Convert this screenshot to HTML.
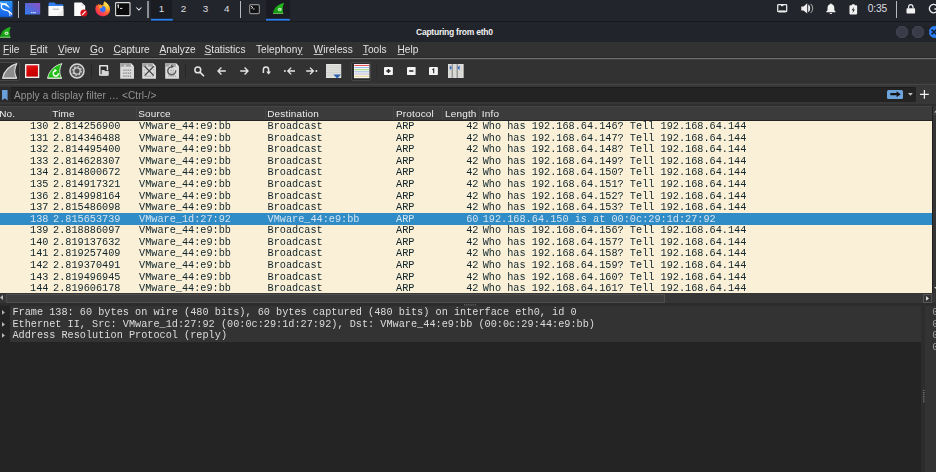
<!DOCTYPE html>
<html>
<head>
<meta charset="utf-8">
<title>Capturing from eth0</title>
<style>
*{margin:0;padding:0;box-sizing:border-box;}
html,body{width:936px;height:472px;overflow:hidden;background:#242424;}
body{font-family:"Liberation Sans",sans-serif;position:relative;color:#e6e6e6;}
.abs{position:absolute;}
svg{position:absolute;overflow:visible;}
/* ---------- desktop panel ---------- */
#panel{left:0;top:0;width:936px;height:21.3px;background:#23252c;}
#panelline{left:0;top:20.8px;width:936px;height:1px;background:#17191e;}
.psep{position:absolute;top:1px;width:1.3px;height:16.5px;background:#b9babd;}
.ws{position:absolute;top:2.5px;width:22px;text-align:center;font-size:9.9px;color:#dedee0;}
.active{position:absolute;top:0;height:19px;background:#1b1c22;}
.uline{position:absolute;top:18.7px;height:1.6px;background:#2a7fe8;}
#clock{position:absolute;left:867.7px;top:3.1px;font-size:10.2px;color:#dedee0;letter-spacing:-0.1px;}
/* ---------- title bar ---------- */
#title{left:0;top:21.8px;width:936px;height:20.4px;background:#22242c;}
#title .t{position:absolute;left:416px;top:5.1px;white-space:nowrap;font-size:8.5px;letter-spacing:-0.24px;font-weight:bold;color:#f0f0f0;}
.wbtn{position:absolute;top:4.7px;width:11.2px;height:11.2px;border-radius:50%;background:#393c48;border:0.6px solid #474a57;}
/* ---------- menu bar ---------- */
#menubar{left:0;top:42px;width:936px;height:15px;background:#323232;font-size:10.1px;letter-spacing:0.06px;color:#e2e2e2;}
#menubar span{position:absolute;top:1.8px;white-space:nowrap;}
#menubar u{text-decoration:underline;text-underline-offset:1px;text-decoration-thickness:0.7px;text-decoration-color:#bdbdbd;}
/* ---------- toolbar ---------- */
#toolbar{left:0;top:57.5px;width:936px;height:27px;background:#323232;}
#tbdark{left:0;top:57px;width:936px;height:1px;background:#272727;}
#tbline{left:0;top:58px;width:936px;height:1px;background:#727272;}
#tbline2{left:0;top:59px;width:936px;height:1px;background:#3c3c3c;}
#tbbot{left:0;top:83px;width:936px;height:1px;background:#363636;}
#tbbot2{left:0;top:84px;width:936px;height:1px;background:#444444;}
.tsep{position:absolute;top:6.5px;width:1px;height:14px;background:#272727;}
.pressed{position:absolute;top:4px;height:19.2px;border:1px solid #464646;border-radius:2px;background:#2b2b2b;}
/* ---------- filter bar ---------- */
#filterbar{left:0;top:85px;width:936px;height:19px;background:#373737;}
#filterbar2{left:0;top:104px;width:936px;height:2px;background:#2e2e2e;}
#filterinput{left:0;top:87px;width:916px;height:14.6px;background:#232323;box-shadow:inset 0 1px 0 #1c1c1c;border-radius:0 2px 2px 0;}
#filterinput .lead{position:absolute;left:0;top:0;width:11.3px;height:14.6px;background:#2a2a2a;}
#filterinput .ph{position:absolute;left:13.6px;top:2.6px;font-size:10.1px;letter-spacing:0.1px;color:#959595;white-space:nowrap;}
#applybtn{position:absolute;left:887px;top:2.8px;width:16px;height:9.6px;background:#6ea4dc;border-radius:1.5px;}
/* ---------- packet list ---------- */
#hdr{left:0;top:106px;width:936px;height:14px;background:#3b3b3b;box-shadow:inset 0 1px 0 #454545;font-size:10px;letter-spacing:0.16px;color:#eeeeee;}
#hdr span{position:absolute;top:1.5px;white-space:nowrap;transform:scaleY(0.91);transform-origin:0 82%;}
#hdr i{position:absolute;top:0;width:1px;height:14px;background:#444444;}
#plbg{left:0;top:120.5px;width:932px;height:172.3px;background:#faf0d7;}
#selbg{left:0;top:213.2px;width:932px;height:11.65px;background:#308cc6;}
#plist{left:0;top:120.5px;width:932px;height:172.3px;overflow:hidden;font-family:"Liberation Mono",monospace;font-size:10.225px;color:#0e232a;}
.row{position:absolute;left:0;width:932px;height:11.59px;line-height:11.59px;white-space:pre;}
.row span{position:absolute;top:0px;white-space:pre;}
.row.sel{color:#d2e4f2;}
.c0{left:0;width:48.5px;text-align:right;}
.c1{left:53px;}
.c2{left:139px;}
.c3{left:267.5px;}
.c4{left:396px;}
.c5{left:440px;width:38.5px;text-align:right;}
.c6{left:482.7px;}
#vs{left:932px;top:106.2px;width:4px;height:186.6px;background:#343434;}
#hs{left:0;top:292.8px;width:936px;height:10.2px;background:#363636;}
#hs .handle{position:absolute;left:6.2px;top:1.2px;width:659px;height:9px;background:#3d3d3d;border:1px solid #4d4d4d;}
#hs .rb{position:absolute;left:923px;top:1.3px;width:8.8px;height:8.6px;background:#333;border:1px solid #555;}
#split1{left:0;top:303px;width:936px;height:3.4px;background:#2c2c2c;}
/* ---------- detail pane ---------- */
#detail{left:0;top:306.2px;width:921px;height:165.8px;background:#242424;font-family:"Liberation Mono",monospace;font-size:10.225px;color:#dcdcdc;}
#detail .bg{position:absolute;left:9.9px;top:0;width:911.1px;height:35.8px;background:#333333;}
#detail .ln{position:absolute;left:12.4px;white-space:pre;height:11.5px;line-height:11.5px;}
#split2{left:921px;top:306.2px;width:3.8px;height:165.8px;background:#2d2d2d;}
#hex{left:924.7px;top:306.3px;width:11.3px;height:165.7px;background:#333333;font-family:"Liberation Mono",monospace;font-size:10.225px;color:#9c9c9c;}
#hex .bg{display:none;}
#hex div.h{position:absolute;left:7.3px;height:11.5px;line-height:11.5px;}

#menubar,#filterinput .ph,#hdr,#plist,#detail,#hex{will-change:transform;}

</style>
</head>
<body>
<div id="panel" class="abs">
<svg width="0" height="0" style="position:absolute"><defs>
<linearGradient id="kg" x1="0" y1="0" x2="0" y2="1"><stop offset="0" stop-color="#2b94f7"/><stop offset="1" stop-color="#155fe6"/></linearGradient>
<linearGradient id="dg" x1="0" y1="1" x2="1" y2="0"><stop offset="0" stop-color="#2f7df0"/><stop offset="0.55" stop-color="#5f63d4"/><stop offset="1" stop-color="#9350c4"/></linearGradient>
<radialGradient id="ffg" cx="0.78" cy="0.18" r="1.0"><stop offset="0" stop-color="#ffe85a"/><stop offset="0.28" stop-color="#ffc030"/><stop offset="0.52" stop-color="#ff7a30"/><stop offset="0.78" stop-color="#ff3a44"/><stop offset="1" stop-color="#e02a78"/></radialGradient>
<linearGradient id="fg2" x1="0" y1="1" x2="1" y2="0"><stop offset="0" stop-color="#128c10"/><stop offset="0.6" stop-color="#1fb01a"/><stop offset="1" stop-color="#22bb1c"/></linearGradient>
<filter id="glow" x="-30%" y="-30%" width="160%" height="160%"><feGaussianBlur stdDeviation="0.9"/></filter>
</defs></svg>
<!-- kali menu button -->
<svg style="left:0;top:0" width="16" height="20" viewBox="0 0 16 20"><rect x="-3" y="0.7" width="15.6" height="16.3" rx="1" fill="#1a6fee" opacity="0.6" filter="url(#glow)"/><rect x="-1" y="1" width="13.3" height="15.7" rx="0.6" fill="url(#kg)"/>
<path d="M-0.5 2.3 L2.3 3 C3.6 3.3 4.6 3.1 5.6 3.5 C7.2 4.2 8.6 6 9.9 7.9 C8.4 7.3 7.2 6.2 5.6 5.4 C4.6 4.9 3.6 5 2.6 4.4 Z" fill="#ffffff"/>
<path d="M5.2 3.2 L6.8 2.6 L6.2 3.9 Z" fill="#fff"/>
<path d="M2.4 4.2 C0.9 5.4 0.9 7.8 2.6 9 C4.4 10.3 7 10 9 11.5 C10.3 12.5 11.2 13.4 11.7 14.2" stroke="#ffffff" stroke-width="1.25" fill="none" stroke-linecap="round"/>
<path d="M8.6 11.4 C9.4 12.6 9.8 14 9.9 15.6" stroke="#ffffff" stroke-width="0.9" fill="none" stroke-linecap="round"/>
<path d="M0 3.4 L1.6 4.6" stroke="#fff" stroke-width="0.8"/></svg>
<div class="psep" style="left:17.8px"></div>
<!-- show desktop -->
<svg style="left:25px;top:3px" width="15.4" height="11.6" viewBox="0 0 15.4 11.6"><rect x="0" y="0" width="15.2" height="11.4" rx="0.5" fill="url(#dg)"/><rect x="6" y="9.2" width="1.4" height="0.9" fill="#e8eefc"/><rect x="7.9" y="9.2" width="1.4" height="0.9" fill="#e8eefc"/><rect x="9.6" y="9.1" width="1" height="1.1" fill="#ffffff"/></svg>
<!-- file manager -->
<svg style="left:47.8px;top:1.8px" width="16" height="15" viewBox="0 0 16 15"><path d="M1.2 0.6 H6.6 L8 2.2 H14.6 Q15.2 2.2 15.2 2.8 V5 H0.6 V1.2 Q0.6 0.6 1.2 0.6 Z" fill="#2f80ee"/><path d="M0.4 3.9 H15.4 V13.4 Q15.4 14.1 14.7 14.1 H1.1 Q0.4 14.1 0.4 13.4 Z" fill="#fafafa"/><path d="M15.4 7 V13.4 Q15.4 14.1 14.7 14.1 H9 Z" fill="#ececec"/><rect x="4.8" y="6.4" width="6.2" height="1.6" rx="0.3" fill="#c9c9c9"/></svg>
<!-- text editor -->
<svg style="left:73.6px;top:1.6px" width="15" height="16" viewBox="0 0 15 16"><path d="M0.8 0.4 H7.6 L11.2 4 V13.4 Q11.2 14 10.6 14 H0.8 Q0.2 14 0.2 13.4 V1 Q0.2 0.4 0.8 0.4 Z" fill="#fbfbfb"/><path d="M7.6 0.4 L11.2 4 H8.2 Q7.6 4 7.6 3.4 Z" fill="#dcdcdc"/><circle cx="9.9" cy="11.1" r="3.5" fill="#d9141e"/><path d="M8.5 12.6 L11.3 9.6" stroke="#ffffff" stroke-width="1.1" stroke-linecap="round"/></svg>
<!-- firefox -->
<svg style="left:94.6px;top:1.2px" width="16" height="16" viewBox="0 0 16 16"><path d="M9.6 0.3 C10.6 1.4 12.2 2.2 13.4 3.8 C14.6 5.4 15.3 7.2 15 9.4 C14.5 12.8 11.6 15.2 8 15.2 C3.9 15.2 0.5 12.2 0.4 8.2 C0.4 6.2 1 4.6 2 3.4 C2.1 4 2.3 4.5 2.6 4.8 C2.7 4 3 3.2 3.4 2.8 C3.8 3.4 4.2 3.8 4.6 4 C4.9 3.6 5.3 3.3 5.7 3.2 C6 3.8 6.4 4.2 7 4.4 L8.2 4.6 C8.2 3 8.6 1.4 9.6 0.3 Z" fill="url(#ffg)"/><circle cx="7.8" cy="8" r="2.9" fill="#3272ff"/><path d="M4 5.8 C5 4.6 6.6 4.3 8.2 4.6 C7.4 5.2 7.2 5.8 7.4 6.4 C6.2 6.6 5.4 7 5 7.8 C4.4 7.2 4 6.6 4 5.8 Z" fill="#ffa024"/><path d="M4.9 9 C5.8 11 9.2 11.4 10.8 9 C10.8 11.8 8.6 13 6.6 12.4 C5.4 12 4.9 10.6 4.9 9 Z" fill="#9a2ac8" opacity="0.35"/></svg>
<!-- terminal launcher -->
<svg style="left:114.8px;top:2px" width="16" height="14.4" viewBox="0 0 16 14.4"><rect x="0.6" y="0.6" width="14.4" height="13" rx="0.8" fill="#0c0c0e" stroke="#dedede" stroke-width="1.1"/><path d="M3.3 2.6 V6.2 M2.4 3.4 L3.3 2.6" stroke="#f4f4f4" stroke-width="1" fill="none"/><path d="M5 6.4 H7.4" stroke="#f4f4f4" stroke-width="1" fill="none"/></svg>
<svg style="left:135.6px;top:6.8px" width="6" height="4" viewBox="0 0 6 4"><path d="M0.4 0.5 L2.9 3 L5.4 0.5" stroke="#f2f2f2" stroke-width="1.05" fill="none"/></svg>
<div class="psep" style="left:147.2px;width:1.6px;background:#8d8e91"></div>
<!-- workspaces -->
<div class="active" style="left:150.7px;width:21.8px"></div>
<svg style="left:150.7px;top:18px" width="21.8" height="3" viewBox="0 0 21.8 3"><rect x="0" y="0.8" width="21.8" height="1.8" fill="#2a7fee"/></svg>
<div class="ws" style="left:150.6px">1</div>
<div class="ws" style="left:172.4px">2</div>
<div class="ws" style="left:194.4px">3</div>
<div class="ws" style="left:215.8px">4</div>
<div class="psep" style="left:240px"></div>
<!-- task: terminal -->
<svg style="left:249.3px;top:3.7px" width="11" height="10.4" viewBox="0 0 11 10.4"><rect x="0.6" y="0.6" width="9.8" height="9.1" rx="1.4" fill="#111113" stroke="#8c8c8f" stroke-width="1.2"/><path d="M1.9 2.1 L4 3.6 L2.4 4.4" stroke="#ececec" stroke-width="0.9" fill="none"/><path d="M4.2 5 H5.6" stroke="#ececec" stroke-width="0.9"/></svg>
<!-- task: wireshark -->
<div class="active" style="left:266.4px;width:23.8px"></div>
<svg style="left:266.4px;top:18px" width="23.8" height="3" viewBox="0 0 23.8 3"><rect x="0" y="0.8" width="23.8" height="1.8" fill="#2a7fee"/></svg>
<svg style="left:272.7px;top:3.3px" width="11.3" height="11" viewBox="0 0 20 23" preserveAspectRatio="none"><path d="M0 21.4 C1.4 10.6 8 2.6 19.6 0 C16.6 7 16.4 14.4 18.2 21.4 Z" fill="url(#fg2)"/><path d="M0 20.8 L18 20.8 L18.3 22.6 L0 22.6 Z" fill="#86d67e"/><circle cx="12" cy="13.6" r="3.5" fill="#c4ecc0"/><circle cx="12" cy="14" r="1.3" fill="#3cb838"/></svg>
<!-- tray -->
<svg style="left:777.4px;top:4.3px" width="10.4" height="9" viewBox="0 0 10.4 9"><path d="M1.5 0.7 H8.9 Q9.7 0.7 9.7 1.5 V6.9 Q9.7 7.7 8.9 7.7 H1.5 Q0.7 7.7 0.7 6.9 V1.5 Q0.7 0.7 1.5 0.7 Z" fill="none" stroke="#ececec" stroke-width="1.25"/><path d="M1.8 6.4 H8.6 V8.3 H1.8 Z" fill="#ececec"/><path d="M4 0.8 H6.4 V2.2 H4 Z" fill="#ececec"/></svg>
<svg style="left:800.6px;top:3.1px" width="13" height="11" viewBox="0 0 13 11"><path d="M0.3 3.4 H2.6 L6.2 0.3 V10.5 L2.6 7.4 H0.3 Z" fill="#f0f0f0"/><path d="M7.2 1.6 C9.8 2.6 9.8 8.2 7.2 9.2 Z" fill="#f0f0f0"/><path d="M9.6 0.9 C12.4 3.2 12.4 7.6 9.6 9.9" stroke="#9c9c9f" stroke-width="1.1" fill="none"/></svg>
<svg style="left:825.6px;top:3.2px" width="10" height="11.4" viewBox="0 0 10 11.4"><path d="M4.9 0.4 C5.5 0.4 5.8 0.8 5.8 1.3 C7.4 1.8 8.3 3.2 8.3 5 V7.2 L9.5 8.6 V9.2 H0.3 V8.6 L1.5 7.2 V5 C1.5 3.2 2.4 1.8 4 1.3 C4 0.8 4.3 0.4 4.9 0.4 Z" fill="#f2f2f2"/><path d="M3.7 9.9 H6.1 C6.1 10.6 5.6 11.1 4.9 11.1 C4.2 11.1 3.7 10.6 3.7 9.9 Z" fill="#f2f2f2"/></svg>
<svg style="left:849px;top:3.8px" width="9" height="10.8" viewBox="0 0 9 11"><path d="M3 0.3 H5.6 V1.4 H7.4 Q8.2 1.4 8.2 2.2 V9.8 Q8.2 10.6 7.4 10.6 H1.2 Q0.4 10.6 0.4 9.8 V2.2 Q0.4 1.4 1.2 1.4 H3 Z" fill="#f2f2f2"/><path d="M5.2 2.8 L2.6 6.4 H4.2 L3.4 9.4 L6 5.6 H4.4 Z" fill="#23252c"/></svg>
<div id="clock">0:35</div>
<div class="psep" style="left:895.9px"></div>
<svg style="left:906px;top:4.2px" width="9.6" height="9.8" viewBox="0 0 9.6 9.8"><path d="M2.6 4.4 V2.9 C2.6 1.5 3.6 0.7 4.8 0.7 C6 0.7 7 1.5 7 2.9 V4.4" stroke="#f2f2f2" stroke-width="1.2" fill="none"/><rect x="0.5" y="4.2" width="8.6" height="5.2" rx="0.7" fill="#f2f2f2"/></svg>
<svg style="left:929.4px;top:4px" width="10" height="10" viewBox="0 0 10 10"><path d="M7.6 1.6 A4.2 4.2 0 1 0 8.8 5 H5.4" stroke="#f2f2f2" stroke-width="1.3" fill="none"/></svg>

</div>
<div id="panelline" class="abs"></div>
<div id="title" class="abs">
<svg style="left:0px;top:5px" width="11.2" height="10.9" viewBox="0 0 20 23" preserveAspectRatio="none"><defs><linearGradient id="fg" x1="0" y1="1" x2="1" y2="0"><stop offset="0" stop-color="#128c10"/><stop offset="0.6" stop-color="#1fb01a"/><stop offset="1" stop-color="#22bb1c"/></linearGradient></defs><path d="M0 21.4 C1.4 10.6 8 2.6 19.2 0 C16.4 7 16.2 14.4 18.6 21.4 Z" fill="url(#fg)"/><path d="M0 20.6 L18.4 20.6 L18.8 22.6 L0 22.6 Z" fill="#86d67e"/><circle cx="11.6" cy="13.2" r="3.5" fill="#c4ecc0"/><circle cx="11.6" cy="13.6" r="1.3" fill="#3cb838"/></svg>
<div class="t">Capturing from eth0</div>
<div class="wbtn" style="left:896.4px"></div>
<div class="wbtn" style="left:912.4px"></div>
<div class="wbtn" style="left:928.6px;background:#2b7df0;border-color:#2b7df0"></div>
<svg style="left:931.2px;top:7.6px" width="6" height="6" viewBox="0 0 6 6"><path d="M0.6 0.6 L5.4 5.4 M5.4 0.6 L0.6 5.4" stroke="#10203a" stroke-width="1.5" fill="none"/></svg>
</div>
<div id="menubar" class="abs">
<span style="left:3px"><u>F</u>ile</span>
<span style="left:30px"><u>E</u>dit</span>
<span style="left:58px"><u>V</u>iew</span>
<span style="left:90px"><u>G</u>o</span>
<span style="left:113.4px"><u>C</u>apture</span>
<span style="left:159.4px"><u>A</u>nalyze</span>
<span style="left:204.5px"><u>S</u>tatistics</span>
<span style="left:256px">Telephon<u>y</u></span>
<span style="left:313.6px"><u>W</u>ireless</span>
<span style="left:362.8px"><u>T</u>ools</span>
<span style="left:397.5px"><u>H</u>elp</span>
</div>
<div id="toolbar" class="abs">
<!-- toolbar origin y=57.5 -->
<div class="pressed" style="left:-1px;width:20.6px"></div>
<!-- start capture (disabled grey fin) -->
<svg style="left:1.8px;top:5.4px" width="15.6" height="15.8" viewBox="0 0 15.6 15.8"><path d="M0.6 15.1 C2 8.6 6.4 2.9 14.9 0.6 C12.3 5.4 12 10.6 14.6 15.1 Z" fill="#8c8c8c" stroke="#dadada" stroke-width="1.1" stroke-linejoin="round"/><path d="M0.4 15.3 H14.8" stroke="#dadada" stroke-width="1"/></svg>
<!-- stop -->
<svg style="left:24.9px;top:6.5px" width="14.4" height="14.2" viewBox="0 0 14.4 14.2"><defs><linearGradient id="rg" x1="0" y1="0" x2="0.3" y2="1"><stop offset="0" stop-color="#e02424"/><stop offset="0.5" stop-color="#d80202"/><stop offset="1" stop-color="#c40000"/></linearGradient></defs><rect x="0" y="0" width="14.3" height="14" rx="0.5" fill="#f1f1f1"/><rect x="1.4" y="1.3" width="11.5" height="11.3" fill="url(#rg)"/></svg>
<!-- restart (green fin) -->
<svg style="left:46.8px;top:5.4px" width="15.6" height="15.8" viewBox="0 0 15.6 15.8"><path d="M0.6 15.1 C2 8.6 6.4 2.9 14.9 0.6 C12.3 5.4 12 10.6 14.6 15.1 Z" fill="#1fbe12" stroke="#e6eee4" stroke-width="0.9" stroke-linejoin="round"/><path d="M0.4 15.3 H14.8" stroke="#e6eee4" stroke-width="0.9"/><path d="M11.4 10.2 A2.6 2.6 0 1 1 8.5 7.8" stroke="#f6fff4" stroke-width="1.35" fill="none"/><path d="M7.4 5.8 L10.2 7.4 L7.4 9.2 Z" fill="#f6fff4"/></svg>
<!-- options gear -->
<svg style="left:69px;top:5.4px" width="16.2" height="16.2" viewBox="0 0 16.2 16.2"><circle cx="8" cy="8" r="7" fill="#585858" stroke="#d8d8d8" stroke-width="1.5"/><circle cx="8" cy="8" r="4.3" fill="none" stroke="#cdcdcd" stroke-width="1.3" stroke-dasharray="1.5 1.88"/><circle cx="8" cy="8" r="3.2" fill="#505050" stroke="#cfcfcf" stroke-width="1.3"/></svg>
<div class="tsep" style="left:91.4px"></div>
<!-- open -->
<svg style="left:99.3px;top:7.7px" width="10" height="11" viewBox="0 0 10 11"><path d="M0.8 0.8 H8.4 V9.9 H0.8 Z" fill="#2c2c2c" stroke="#e4e4e4" stroke-width="1.5" stroke-linejoin="round"/><path d="M2.6 4.9 H5.4 L6.2 6 H9.7 V10.6 H2.6 Z" fill="#d6d6d6"/><path d="M2.2 4.5 H5.6 L6.4 5.6 H9.9" stroke="#2c2c2c" stroke-width="0.8" fill="none"/></svg>
<!-- save -->
<svg style="left:119.9px;top:5.5px" width="14.2" height="16" viewBox="0 0 14.2 16"><path d="M0.2 0.2 H10.9 L14 3.4 V15.8 H0.2 Z" fill="#dbdbdb"/><path d="M0.2 0.2 H10.9 L14 3.4 V3.7 H0.2 Z" fill="#a2a2a2"/><path d="M10.9 0.2 L14 3.4 H10.9 Z" fill="#ededed"/><path d="M3.4 3.7 L5.4 0.8 L6.2 3.7 Z" fill="#d4d4d4"/><g fill="#8f8f8f"><rect x="3.2" y="6.4" width="1.3" height="1.5"/><rect x="5.4" y="6.4" width="1.3" height="1.5"/><rect x="7.6" y="6.4" width="1.3" height="1.5"/><rect x="9.8" y="6.4" width="1.3" height="1.5"/><rect x="3.2" y="9.4" width="1.3" height="1.5"/><rect x="5.4" y="9.4" width="1.3" height="1.5"/><rect x="7.6" y="9.4" width="1.3" height="1.5"/><rect x="9.8" y="9.4" width="1.3" height="1.5"/><rect x="3.2" y="12.4" width="1.3" height="1.5"/><rect x="5.4" y="12.4" width="1.3" height="1.5"/><rect x="7.6" y="12.4" width="1.3" height="1.5"/><rect x="9.8" y="12.4" width="1.3" height="1.5"/></g></svg>
<!-- close -->
<svg style="left:142.2px;top:5.5px" width="14.2" height="16" viewBox="0 0 14.2 16"><path d="M0.2 0.2 H10.9 L14 3.4 V15.8 H0.2 Z" fill="#dbdbdb"/><path d="M0.2 0.2 H10.9 L14 3.4 V3.7 H0.2 Z" fill="#a2a2a2"/><path d="M10.9 0.2 L14 3.4 H10.9 Z" fill="#ededed"/><path d="M3.4 3.7 L5.4 0.8 L6.2 3.7 Z" fill="#d4d4d4"/><g fill="#a8a8a8"><rect x="3.2" y="12.4" width="1.3" height="1.5"/><rect x="5.4" y="12.4" width="1.3" height="1.5"/><rect x="7.6" y="12.4" width="1.3" height="1.5"/><rect x="9.8" y="12.4" width="1.3" height="1.5"/></g><g fill="#b4b4b4"><rect x="1.8" y="6.4" width="1.3" height="1.5"/><rect x="11.2" y="6.4" width="1.3" height="1.5"/><rect x="1.8" y="9.4" width="1.3" height="1.5"/><rect x="11.2" y="9.4" width="1.3" height="1.5"/></g><path d="M2.6 3.2 L11.8 12.6 M11.8 3.2 L2.6 12.6" stroke="#474747" stroke-width="1.3" fill="none"/></svg>
<!-- reload -->
<svg style="left:164.8px;top:5.5px" width="14.2" height="16" viewBox="0 0 14.2 16"><path d="M0.2 0.2 H10.9 L14 3.4 V15.8 H0.2 Z" fill="#dbdbdb"/><path d="M0.2 0.2 H10.9 L14 3.4 V3.7 H0.2 Z" fill="#a2a2a2"/><path d="M10.9 0.2 L14 3.4 H10.9 Z" fill="#ededed"/><path d="M3.4 3.7 L5.4 0.8 L6.2 3.7 Z" fill="#d4d4d4"/><g fill="#a8a8a8"><rect x="3.2" y="12.4" width="1.3" height="1.5"/><rect x="5.4" y="12.4" width="1.3" height="1.5"/><rect x="7.6" y="12.4" width="1.3" height="1.5"/><rect x="9.8" y="12.4" width="1.3" height="1.5"/></g><g fill="#a4a4a4"><rect x="5.4" y="6.8" width="1.3" height="1.5"/><rect x="7.6" y="6.8" width="1.3" height="1.5"/><rect x="5.4" y="9.4" width="1.3" height="1.5"/><rect x="7.6" y="9.4" width="1.3" height="1.5"/></g><path d="M10.7 7.4 A4 4 0 1 1 6.6 3.9" stroke="#555555" stroke-width="1.3" fill="none"/><path d="M6 1.8 L9 3.6 L6.2 5.6 Z" fill="#555555"/></svg>
<div class="tsep" style="left:185px"></div>
<!-- find -->
<svg style="left:193.6px;top:8.8px" width="11" height="11" viewBox="0 0 11 11"><circle cx="3.8" cy="3.9" r="2.9" fill="none" stroke="#e4e4e4" stroke-width="1.5"/><path d="M5.9 6.1 L10 10.2" stroke="#e4e4e4" stroke-width="1.6"/></svg>
<!-- back -->
<svg style="left:217.2px;top:9.4px" width="9" height="8" viewBox="0 0 9 8"><path d="M8.8 4 H1.4 M4.4 0.6 L1 4 L4.4 7.4" stroke="#e4e4e4" stroke-width="1.35" fill="none"/></svg>
<!-- forward -->
<svg style="left:239.6px;top:9.4px" width="9" height="8" viewBox="0 0 9 8"><path d="M0.2 4 H7.6 M4.6 0.6 L8 4 L4.6 7.4" stroke="#e4e4e4" stroke-width="1.35" fill="none"/></svg>
<!-- goto -->
<svg style="left:261.6px;top:8.4px" width="9.4" height="9" viewBox="0 0 9.4 9"><path d="M1.4 7 V3.8 C1.4 0.2 6.6 0.2 6.6 3.8 V7.4" stroke="#e4e4e4" stroke-width="1.5" fill="none"/><path d="M4.2 5.6 L6.6 8.4 L9 5.6 Z" fill="#e4e4e4"/></svg>
<!-- first -->
<svg style="left:284px;top:9.4px" width="11.4" height="8" viewBox="0 0 11.4 8"><circle cx="0.9" cy="4" r="1" fill="#e4e4e4"/><path d="M11 4 H4.2 M7.2 0.6 L3.8 4 L7.2 7.4" stroke="#e4e4e4" stroke-width="1.35" fill="none"/></svg>
<!-- last -->
<svg style="left:305.6px;top:9.4px" width="11.4" height="8" viewBox="0 0 11.4 8"><circle cx="10.4" cy="4" r="1" fill="#e4e4e4"/><path d="M0.2 4 H7 M4 0.6 L7.4 4 L4 7.4" stroke="#e4e4e4" stroke-width="1.35" fill="none"/></svg>
<!-- autoscroll -->
<svg style="left:326.4px;top:6.5px" width="15.4" height="14.4" viewBox="0 0 15.4 14.4"><rect x="0" y="0" width="15.2" height="14" fill="#e4e4e2"/><g stroke="#c2c2c0" stroke-width="0.55"><path d="M0 1.7 H15.2 M0 3.4 H15.2 M0 5.1 H15.2 M0 6.8 H15.2 M0 8.5 H15.2 M0 10.2 H15.2 M0 11.9 H15.2"/></g><path d="M7.4 10.6 H15 L11.2 14.4 Z" fill="#2a5fb4"/></svg>
<!-- colorize (pressed) -->
<div class="pressed" style="left:351px;width:20.4px"></div>
<svg style="left:353.6px;top:6.5px" width="15.4" height="14.4" viewBox="0 0 15.4 14.4"><rect x="0" y="0" width="15.4" height="14.2" fill="#fbfbfb"/><rect x="0.4" y="0.9" width="14.6" height="1.1" fill="#e8525a"/><rect x="0.4" y="3" width="14.6" height="1.1" fill="#9dbce6"/><rect x="0.4" y="5" width="14.6" height="1.3" fill="#b4dc8c"/><rect x="0.4" y="7.2" width="14.6" height="1.2" fill="#a6c0de"/><rect x="0.4" y="9.2" width="14.6" height="1.6" fill="#d4cfe2"/><rect x="0.4" y="11.6" width="14.6" height="1.5" fill="#ecd9a0"/></svg>
<div class="tsep" style="left:376px;background:#2c2c2c"></div>
<!-- zoom in -->
<svg style="left:384px;top:9.3px" width="9" height="8.2" viewBox="0 0 9 8.2"><rect x="0" y="0" width="8.9" height="8" rx="0.5" fill="#f4f4f4"/><path d="M4.45 1.9 V6.1 M2.3 4 H6.6" stroke="#222" stroke-width="1.5"/></svg>
<!-- zoom out -->
<svg style="left:406.8px;top:9.3px" width="9" height="8.2" viewBox="0 0 9 8.2"><rect x="0" y="0" width="8.6" height="8" rx="0.5" fill="#f4f4f4"/><path d="M2.2 4 H6.4" stroke="#222" stroke-width="1.5"/></svg>
<!-- zoom 1 -->
<svg style="left:429px;top:9.3px" width="9" height="8.2" viewBox="0 0 9 8.2"><rect x="0" y="0" width="8.9" height="8" rx="0.5" fill="#f4f4f4"/><path d="M3.4 2.8 L4.7 2 V6.3" stroke="#222" stroke-width="1.1" fill="none"/></svg>
<!-- resize columns -->
<svg style="left:448.4px;top:6.5px" width="15.6" height="14.4" viewBox="0 0 15.6 14.4"><rect x="0" y="0" width="15.6" height="14" fill="#e6e6e4"/><g stroke="#cacac8" stroke-width="0.4"><path d="M0 1.6 H15.6 M0 3.2 H15.6 M0 4.8 H15.6 M0 6.4 H15.6 M0 8 H15.6 M0 9.6 H15.6 M0 11.2 H15.6 M0 12.8 H15.6 M1.4 0 V14 M2.8 0 V14 M5.6 0 V14 M7 0 V14 M8.4 0 V14 M10.6 0 V14 M12 0 V14 M13.4 0 V14"/></g><path d="M4.2 0 V14 M9.2 0 V14" stroke="#5e5e5e" stroke-width="0.8"/><path d="M1.8 1.5 L4 3.8 L1.8 6.1 Z" fill="#2a62c0"/><path d="M11.6 1.5 L9.3 3.8 L11.6 6.1 Z" fill="#2a62c0"/></svg>

</div>
<div id="tbdark" class="abs"></div>
<div id="tbline" class="abs"></div>
<div id="tbline2" class="abs"></div>
<div id="tbbot" class="abs"></div>
<div id="tbbot2" class="abs"></div>
<div id="filterbar" class="abs"></div>
<div id="filterbar2" class="abs"></div>
<div id="filterinput" class="abs">
<div class="lead"></div>
<svg style="left:1.9px;top:2.7px" width="5.6" height="10.5" viewBox="0 0 5.6 10.6"><path d="M0 0 H5.6 V10.6 L2.8 8.3 L0 10.6 Z" fill="#6a9fd9"/></svg>
<div class="ph">Apply a display filter … &lt;Ctrl-/&gt;</div>
<div id="applybtn"><svg style="left:2.6px;top:1.6px" width="11" height="6.4" viewBox="0 0 11 6.4"><path d="M0.3 2.1 H6.6 V0.2 L10.7 3.2 L6.6 6.2 V4.3 H0.3 Z" fill="#151515"/></svg></div>
<svg style="left:908.4px;top:6.2px" width="4.8" height="2.8" viewBox="0 0 4.8 2.8"><path d="M0 0 H4.8 L2.4 2.8 Z" fill="#c4c4c4"/></svg>
</div>
<svg style="left:920px;top:90.1px" width="8.8" height="8.8" viewBox="0 0 8.8 8.8"><path d="M4.4 0 V8.8 M0 4.4 H8.8" stroke="#f2f2f2" stroke-width="1.25" fill="none"/></svg>
<div id="hdr" class="abs">
<span style="left:-0.8px">No.</span>
<span style="left:52.3px">Time</span>
<span style="left:138.2px">Source</span>
<span style="left:267.2px">Destination</span>
<span style="left:396px">Protocol</span>
<span style="left:445px">Length</span>
<span style="left:481.8px">Info</span>
<i style="left:50.3px"></i><i style="left:135.6px"></i><i style="left:264.6px"></i><i style="left:393.3px"></i><i style="left:442px"></i><i style="left:479px"></i>
</div>
<div id="plbg" class="abs"></div>
<div id="selbg" class="abs"></div>
<div id="plist" class="abs">
<div class="row" style="top:0.00px"><span class="c0">130</span><span class="c1">2.814256900</span><span class="c2">VMware_44:e9:bb</span><span class="c3">Broadcast</span><span class="c4">ARP</span><span class="c5">42</span><span class="c6">Who has 192.168.64.146? Tell 192.168.64.144</span></div>
<div class="row" style="top:11.59px"><span class="c0">131</span><span class="c1">2.814346488</span><span class="c2">VMware_44:e9:bb</span><span class="c3">Broadcast</span><span class="c4">ARP</span><span class="c5">42</span><span class="c6">Who has 192.168.64.147? Tell 192.168.64.144</span></div>
<div class="row" style="top:23.18px"><span class="c0">132</span><span class="c1">2.814495400</span><span class="c2">VMware_44:e9:bb</span><span class="c3">Broadcast</span><span class="c4">ARP</span><span class="c5">42</span><span class="c6">Who has 192.168.64.148? Tell 192.168.64.144</span></div>
<div class="row" style="top:34.77px"><span class="c0">133</span><span class="c1">2.814628307</span><span class="c2">VMware_44:e9:bb</span><span class="c3">Broadcast</span><span class="c4">ARP</span><span class="c5">42</span><span class="c6">Who has 192.168.64.149? Tell 192.168.64.144</span></div>
<div class="row" style="top:46.36px"><span class="c0">134</span><span class="c1">2.814800672</span><span class="c2">VMware_44:e9:bb</span><span class="c3">Broadcast</span><span class="c4">ARP</span><span class="c5">42</span><span class="c6">Who has 192.168.64.150? Tell 192.168.64.144</span></div>
<div class="row" style="top:57.95px"><span class="c0">135</span><span class="c1">2.814917321</span><span class="c2">VMware_44:e9:bb</span><span class="c3">Broadcast</span><span class="c4">ARP</span><span class="c5">42</span><span class="c6">Who has 192.168.64.151? Tell 192.168.64.144</span></div>
<div class="row" style="top:69.54px"><span class="c0">136</span><span class="c1">2.814998164</span><span class="c2">VMware_44:e9:bb</span><span class="c3">Broadcast</span><span class="c4">ARP</span><span class="c5">42</span><span class="c6">Who has 192.168.64.152? Tell 192.168.64.144</span></div>
<div class="row" style="top:81.13px"><span class="c0">137</span><span class="c1">2.815486098</span><span class="c2">VMware_44:e9:bb</span><span class="c3">Broadcast</span><span class="c4">ARP</span><span class="c5">42</span><span class="c6">Who has 192.168.64.153? Tell 192.168.64.144</span></div>
<div class="row sel" style="top:92.72px"><span class="c0">138</span><span class="c1">2.815653739</span><span class="c2">VMware_1d:27:92</span><span class="c3">VMware_44:e9:bb</span><span class="c4">ARP</span><span class="c5">60</span><span class="c6">192.168.64.150 is at 00:0c:29:1d:27:92</span></div>
<div class="row" style="top:104.31px"><span class="c0">139</span><span class="c1">2.818886097</span><span class="c2">VMware_44:e9:bb</span><span class="c3">Broadcast</span><span class="c4">ARP</span><span class="c5">42</span><span class="c6">Who has 192.168.64.156? Tell 192.168.64.144</span></div>
<div class="row" style="top:115.90px"><span class="c0">140</span><span class="c1">2.819137632</span><span class="c2">VMware_44:e9:bb</span><span class="c3">Broadcast</span><span class="c4">ARP</span><span class="c5">42</span><span class="c6">Who has 192.168.64.157? Tell 192.168.64.144</span></div>
<div class="row" style="top:127.49px"><span class="c0">141</span><span class="c1">2.819257409</span><span class="c2">VMware_44:e9:bb</span><span class="c3">Broadcast</span><span class="c4">ARP</span><span class="c5">42</span><span class="c6">Who has 192.168.64.158? Tell 192.168.64.144</span></div>
<div class="row" style="top:139.08px"><span class="c0">142</span><span class="c1">2.819370491</span><span class="c2">VMware_44:e9:bb</span><span class="c3">Broadcast</span><span class="c4">ARP</span><span class="c5">42</span><span class="c6">Who has 192.168.64.159? Tell 192.168.64.144</span></div>
<div class="row" style="top:150.67px"><span class="c0">143</span><span class="c1">2.819496945</span><span class="c2">VMware_44:e9:bb</span><span class="c3">Broadcast</span><span class="c4">ARP</span><span class="c5">42</span><span class="c6">Who has 192.168.64.160? Tell 192.168.64.144</span></div>
<div class="row" style="top:162.26px"><span class="c0">144</span><span class="c1">2.819606178</span><span class="c2">VMware_44:e9:bb</span><span class="c3">Broadcast</span><span class="c4">ARP</span><span class="c5">42</span><span class="c6">Who has 192.168.64.161? Tell 192.168.64.144</span></div>
</div>
<div id="vs" class="abs">
<div style="position:absolute;left:0;top:0;width:0.8px;height:186.6px;background:#202020"></div>
<div style="position:absolute;left:1px;top:0;width:3px;height:9px;background:#363636;border-bottom:1px solid #474747"></div>
<svg style="left:2.2px;top:3.4px" width="2" height="2.4" viewBox="0 0 2 2.4"><path d="M0 2.4 L2 0.4 V2.4 Z" fill="#c8c8c8"/></svg>
<svg style="left:2.2px;top:180.6px" width="2" height="2.4" viewBox="0 0 2 2.4"><path d="M0 0 L2 2 V0 Z" fill="#c8c8c8"/></svg>
</div>
<div id="hs" class="abs">
<svg style="left:0.3px;top:2.6px" width="3" height="5" viewBox="0 0 3 5"><path d="M3 0 L0 2.5 L3 5 Z" fill="#bdbdbd"/></svg>
<div class="handle"></div>
<div class="rb"></div>
<svg style="left:926.1px;top:3.2px" width="3" height="4.8" viewBox="0 0 3 5"><path d="M0 0 L3 2.5 L0 5 Z" fill="#e0e0e0"/></svg>
</div>
<div id="split1" class="abs">
<svg style="left:464px;top:1.1px" width="12.2" height="1.9" viewBox="0 0 12.2 1.9"><path d="M0 0.95 H12.2" stroke="#5c5c5c" stroke-width="1.8" stroke-dasharray="1 0.86" fill="none"/></svg>
</div>
<div id="detail" class="abs">
<div class="bg"></div>
<svg style="left:2.4px;top:3.9px" width="2.9" height="4.8" viewBox="0 0 3 5"><path d="M0 0 L3 2.5 L0 5 Z" fill="#b4b4b4"/></svg>
<svg style="left:2.4px;top:15.7px" width="2.9" height="4.8" viewBox="0 0 3 5"><path d="M0 0 L3 2.5 L0 5 Z" fill="#bdbdbd"/></svg>
<svg style="left:2.4px;top:27.2px" width="2.9" height="4.8" viewBox="0 0 3 5"><path d="M0 0 L3 2.5 L0 5 Z" fill="#bdbdbd"/></svg>
<div class="ln" style="top:1.3px">Frame 138: 60 bytes on wire (480 bits), 60 bytes captured (480 bits) on interface eth0, id 0</div>
<div class="ln" style="top:12.7px">Ethernet II, Src: VMware_1d:27:92 (00:0c:29:1d:27:92), Dst: VMware_44:e9:bb (00:0c:29:44:e9:bb)</div>
<div class="ln" style="top:24.2px">Address Resolution Protocol (reply)</div>
</div>
<div id="split2" class="abs">
<svg style="left:2.1px;top:83.8px" width="1.5" height="12.3" viewBox="0 0 1.5 12.3"><path d="M0.75 0 V12.3" stroke="#7a7a7a" stroke-width="1.4" stroke-dasharray="1 0.88" fill="none"/></svg>
</div>
<div id="hex" class="abs">
<div class="bg"></div>
<div class="h" style="top:1.2px">0</div>
<div class="h" style="top:12.6px">0</div>
<div class="h" style="top:24.1px">0</div>
<div class="h" style="top:35.6px">0</div>
</div>
</body>
</html>
